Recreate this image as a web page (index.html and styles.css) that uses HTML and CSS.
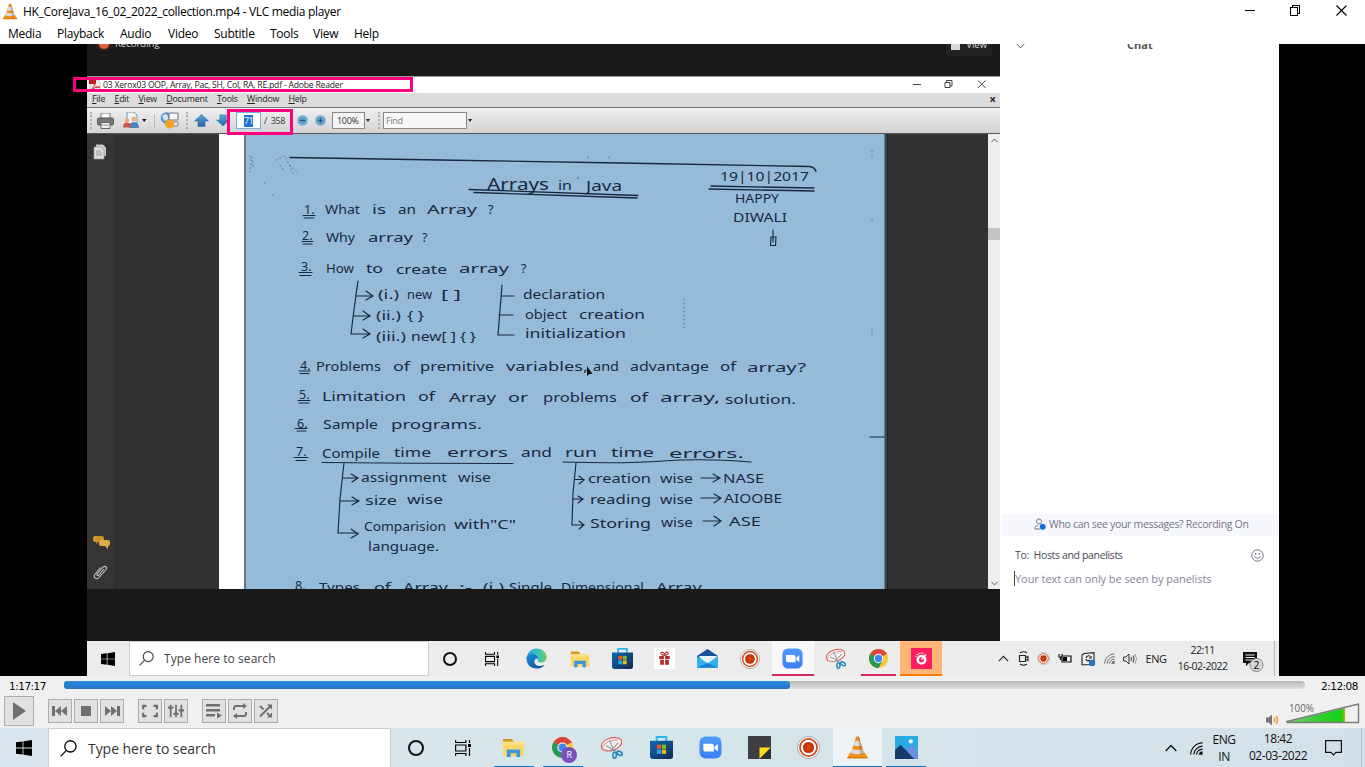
FILE: index.html
```html
<!DOCTYPE html>
<html lang="en">
<head>
<meta charset="utf-8">
<title>HK_CoreJava_16_02_2022_collection.mp4 - VLC media player</title>
<link rel="stylesheet" href="styles.css">
</head>
<body>
<svg class="defs" width="0" height="0" aria-hidden="true">
  <defs>
    <linearGradient id="edgeA" x1="0" y1="0" x2="1" y2="0"><stop offset="0" stop-color="#2aa5de"/><stop offset=".55" stop-color="#35bfc0"/><stop offset="1" stop-color="#6cd35a"/></linearGradient>
    <linearGradient id="edgeB" x1="0" y1="0" x2="1" y2="1"><stop offset="0" stop-color="#1b8fd8"/><stop offset="1" stop-color="#0c4a96"/></linearGradient>
    <linearGradient id="bag" x1="0" y1="0" x2="1" y2="1"><stop offset="0" stop-color="#0e6bb4"/><stop offset="1" stop-color="#14284e"/></linearGradient>
    <linearGradient id="cam" x1="0" y1="0" x2="0" y2="1"><stop offset="0" stop-color="#4d9bff"/><stop offset="1" stop-color="#3c7ef5"/></linearGradient>
    <linearGradient id="vol" x1="0" y1="0" x2="1" y2="0"><stop offset="0" stop-color="#7fd07f"/><stop offset=".5" stop-color="#32cc32"/><stop offset=".94" stop-color="#16d016"/><stop offset="1" stop-color="#b0b800"/></linearGradient>
    <radialGradient id="recDot"><stop offset="0" stop-color="#e04a10"/><stop offset="1" stop-color="#b82a06"/></radialGradient>
    <linearGradient id="arrow" x1="0" y1="0" x2="0" y2="1"><stop offset="0" stop-color="#5ba4d6"/><stop offset="1" stop-color="#2767a8"/></linearGradient>
  </defs>
  <symbol id="cone" viewBox="0 0 24 24"><path d="M4 17.500h16l2.400 5H1.600z" fill="#f59a1c"/><path d="M1.800 21.500h20.400l.6 2H1.200z" fill="#e07a0a"/><path d="M10.500.5h3L19 19q-7 3-14 0z" fill="#f58a1c"/><path d="M9.300 5h5.400l1.500 5q-4.200 1.500-8.400 0zM6.800 13.500q5.200 1.800 10.400 0l1.300 4.500q-6.500 2.200-13 0z" fill="#dcdcdc"/><path d="M12.500.5h1L19 19q-1.500.8-4 1.200z" fill="#7a4a28" opacity=".3"/></symbol>
  <symbol id="win" viewBox="0 0 16 16"><path d="M0 2.300 6.600 1.400V7.600H0zM7.400 1.300 16 0v7.600H7.400zM0 8.400h6.600v6.200L0 13.700zM7.400 8.400H16V16l-8.600-1.300z"/></symbol>
  <symbol id="search" viewBox="0 0 16 16"><circle cx="9.800" cy="6" r="5.300" fill="none" stroke="currentColor" stroke-width="1.200"/><path d="M6 9.800.6 15.400" stroke="currentColor" stroke-width="1.200"/></symbol>
  <symbol id="taskview" viewBox="0 0 16 16"><path d="M.6 0v2.500h10.300V0M.6 16v-2.500h10.300V16M.6 5h10.300v6H.6zM14.500 0v3M14.500 8v8" fill="none" stroke="currentColor" stroke-width="1.200"/><path d="M13 4h3v3h-3z"/></symbol>
  <symbol id="edge" viewBox="0 0 24 24"><path d="M12 .5c7 0 11.500 5 11.500 10 0 4-3 6-6 6-2.500 0-4.500-1-4-2.500C15 10 11 7 8 8c-3.500 1-6 4-6.500 6C-.5 7 5 .5 12 .5z" fill="url(#edgeA)"/><path d="M.5 12C.5 7.500 5.500 6 9 7c3 1 6 3 4.500 6.500-.5-1-1-1.500-2-1.500-4 3-1 8.500 3.500 8.500 2.500 0 4.500-1 6.500-1.500-2.500 3-6 4.500-9.500 4.500C5.500 23.500.5 18.500.5 12z" fill="url(#edgeB)"/></symbol>
  <symbol id="folder" viewBox="0 0 24 24"><path d="M1 3h9l2 2v4H1z" fill="#d79a16"/><path d="M1 6h22v15H1z" fill="#fbd668"/><path d="M1 6h22v3H1z" fill="#ffe08a"/><path d="M5 22v-8h14v8h-4v-4H9v4z" fill="#3f97d4"/></symbol>
  <symbol id="store" viewBox="0 0 24 24"><path d="M7 6V1h10v5" fill="none" stroke="#2db5ee" stroke-width="2"/><path d="M0 5h24v16.500q0 2.500-2.500 2.500h-19Q0 24 0 21.500z" fill="url(#bag)"/><path fill="#ef5123" d="M7.200 9h4.400v4.400H7.200z"/><path fill="#7cba28" d="M12.400 9h4.400v4.400h-4.400z"/><path fill="#26a8e8" d="M7.200 14.200h4.400v4.400H7.200z"/><path fill="#fbba13" d="M12.400 14.200h4.400v4.400h-4.400z"/></symbol>
  <symbol id="gift" viewBox="0 0 24 24"><path fill="#fff" d="M0 0h24v24H0z"/><path d="M6 9h5.300v3.500H6zm6.700 0H18v3.500h-5.300zM7 13.500h4.300V19H7zm5.700 0H17V19h-4.300z" fill="#b32b2b"/><path d="M12 8.500C8 8 7 6 8.500 5S12 6 12 8.500c0-2.500 2-4.500 3.500-3.500S16 8 12 8.500z" fill="none" stroke="#b32b2b" stroke-width="1.200"/></symbol>
  <symbol id="mail" viewBox="0 0 24 24"><path d="M0 9 12 1l12 8v3H0z" fill="#1453a0"/><path d="M2 9h20L12 16z" fill="#f4fafe"/><path d="M0 9.500 12 17 24 9.500V22.500H0z" fill="#34b1ed"/><path d="M2 10 24 9.500 12 17z" fill="#e8f5fc"/><path d="M0 22.500 12 17l12 5.500z" fill="#1684d0"/></symbol>
  <symbol id="rec" viewBox="0 0 24 24"><circle cx="12" cy="12" r="11.500" fill="#fff" stroke="#999" stroke-width=".9"/><circle cx="12" cy="12" r="8.900" fill="none" stroke="#cf4a1c" stroke-width="1.800"/><circle cx="12" cy="12" r="5.800" fill="url(#recDot)"/></symbol>
  <symbol id="zoom" viewBox="0 0 24 24"><rect x=".5" y=".5" width="23" height="23" rx="6.500" fill="url(#cam)"/><path d="M4.500 8h8.500q2.500 0 2.500 2.500V16.300H7Q4.500 16.300 4.500 14zM16.300 11l3.400-2.700v7.700l-3.400-2.500z" fill="#fff"/></symbol>
  <symbol id="snip" viewBox="0 0 24 24"><ellipse cx="12" cy="8.500" rx="11" ry="6.500" transform="rotate(-18 12 8.500)" fill="#f5eeee" stroke="#e0585c" stroke-width="1.100"/><path d="M2.500 15C0 10 10 3.500 19 4" fill="none" stroke="#e58b8e"/><path d="m10 4 4.500 12M19 7l-8 9M6 10l11 6" stroke="#8c969c" stroke-width="1.100"/><g fill="none" stroke="#2185bd" stroke-width="1.700"><ellipse cx="15.300" cy="20" rx="1.800" ry="3"/><ellipse cx="20.500" cy="18" rx="3" ry="1.800" transform="rotate(30 20.500 18)"/></g></symbol>
  <symbol id="chrome" viewBox="0 0 24 24"><circle cx="12" cy="12" r="11" fill="#fbc933"/><path d="M12 12 2.500 6.500A11 11 0 0 1 21.500 6.500z" fill="#d9473a"/><path d="M2.500 6.500A11 11 0 0 0 12 23l4.700-8.300L12 12z" fill="#249b55"/><path d="M12 6.500h9.500" stroke="#d9473a" stroke-width="1"/><circle cx="12" cy="12" r="5.300" fill="#fff"/><circle cx="12" cy="12" r="4.200" fill="#4285f0"/></symbol>
  <symbol id="timer" viewBox="0 0 24 24"><path fill="#fa1e5e" d="M0 0h24v24H0z"/><circle cx="12" cy="13.500" r="4.300" fill="none" stroke="#fff" stroke-width="2.800"/><path d="m12 13.500 5-6" stroke="#fff" stroke-width="1.800"/><path d="M5.500 10a7.500 7.500 0 0 1 9-4" stroke="#fff" stroke-width="1.300" fill="none" stroke-dasharray="1.300 1"/></symbol>
  <symbol id="notes" viewBox="0 0 24 24"><path d="M0 0h24v24H0z" fill="#3e3f42"/><path d="M12 12h12L12 24z" fill="#ffdf14"/><path d="M24 12v12H12z" fill="#2f3032"/></symbol>
  <symbol id="photos" viewBox="0 0 24 24"><path fill="#29a9e6" d="M0 0h24v24H0z"/><path d="m10 16 8-7 6 6v9H14z" fill="#6790de"/><path d="M0 14.500 6 9l14 15H0z" fill="#173a6b"/><circle cx="16.500" cy="5.500" r="2.200" fill="#fff"/></symbol>
  <symbol id="wifi" viewBox="0 0 14 14"><g fill="none" stroke="currentColor" stroke-width="1.200"><path d="M.7 13.500A13 13 0 0 1 13.500 1"/><path d="M4 13.500A10 10 0 0 1 13.500 4.500M7 13.500a7 7 0 0 1 6.500-5.800"/></g><path d="M9.500 13.800a4 4 0 0 1 4-3.800v3.800z" fill="currentColor"/></symbol>
  <symbol id="chev" viewBox="0 0 12 8"><path d="m.7 7 5.300-5.500L11.300 7" fill="none" stroke="currentColor" stroke-width="1.300"/></symbol>
</svg>

<div class="app">
  <header class="titlebar">
    <svg class="cone-s"><use href="#cone"/></svg>
    <span class="title">HK_CoreJava_16_02_2022_collection.mp4 - VLC media player</span>
    <svg class="winbtns" viewBox="0 0 102 11"><g fill="none" stroke="#000" shape-rendering="crispEdges"><path d="M0 5.500h10M45.500 2.500h7v8h-7zM47.500 2V.5h7v8h-2"/></g><path d="m91.500.5 10 10m0-10-10 10" stroke="#000" stroke-width="1.100"/></svg>
  </header>
  <nav class="menubar"><span class="m1">Media</span><span class="m2">Playback</span><span class="m3">Audio</span><span class="m4">Video</span><span class="m5">Subtitle</span><span class="m6">Tools</span><span class="m7">View</span><span>Help</span></nav>

  <main class="video">
    <section class="share">
      <div class="meeting"><i class="reclight"></i><span>Recording</span><span class="viewbtn"><i></i>View</span></div>
      <div class="rtitle">
        <svg width="12" height="11" viewBox="0 0 12 11"><path d="M1 0h8l2 2v9H1z" fill="#eee" stroke="#aaa" stroke-width=".6"/><path d="M0 0h7v4H0z" fill="#c11f1f"/><path d="M2 10c3-3 4-6 3-8 0 4 3 6 6 5-4 0-7 1-9 3z" fill="none" stroke="#d63434"/></svg>
        <span>03 Xerox03 OOP, Array, Pac, SH, Col, RA, RE.pdf - Adobe Reader</span>
        <svg class="rbtns" width="74" height="9" viewBox="0 0 74 9"><path d="M1 4.500h8M33 2.500h5v5h-5zM34.500 2V.5H40V6h-2M66 .5l7.500 7.500M73.500.5 66 8" fill="none" stroke="#444"/></svg>
      </div>
      <div class="rmenu"><span><u>F</u>ile</span><span><u>E</u>dit</span><span><u>V</u>iew</span><span><u>D</u>ocument</span><span><u>T</u>ools</span><span><u>W</u>indow</span><span><u>H</u>elp</span><b>×</b></div>
      <div class="rtools">
        <i class="grip"></i>
        <svg class="t-print" width="17" height="16" viewBox="0 0 17 16"><path d="M4 0h9v6H4z" fill="#f8f8f8" stroke="#777"/><rect x=".5" y="5" width="16" height="7" rx="1.500" fill="#74797c" stroke="#555b5e"/><path d="M4 9.500h9v6H4z" fill="#eee" stroke="#666"/><path d="M5 12h7" stroke="#999"/></svg>
        <svg class="t-share" width="24" height="17" viewBox="0 0 24 17"><path d="M4 0h7l3 3v9H4z" fill="#eef3f8" stroke="#7799b5"/><circle cx="11" cy="7" r="2.600" fill="#e9b17c"/><path d="M6 16q0-6 5-6t5 6z" fill="#4a83bd"/><path d="M0 15.500q0-5 4-5t4 5z" fill="#cb5a4a"/><circle cx="4" cy="8.500" r="2.300" fill="#e8ad78"/><path d="m19 7 2.200 3 2.200-3z" fill="#111"/></svg>
        <i class="tsep"></i>
        <svg class="t-collab" width="19" height="17" viewBox="0 0 19 17"><circle cx="6.500" cy="6" r="5.800" fill="#4c8cc6"/><path d="M2 4q4-4 6 0T4 9z" fill="#cfe2ef"/><path d="M9 1h9v7H9z" fill="#f4f4f4" stroke="#777"/><path d="M13 10h5v4h-5z" fill="#e5e5e5" stroke="#888"/><circle cx="9.500" cy="12" r="4.500" fill="#f3a427"/></svg>
        <i class="grip g2"></i>
        <svg class="t-up" width="15" height="13" viewBox="0 0 15 13"><path d="m7.500.5 7 6.500H11v5.500H4V7H.5z" fill="url(#arrow)" stroke="#2c6aa2" stroke-width=".6"/></svg>
        <svg class="t-down" width="14" height="13" viewBox="0 0 15 13"><path d="m7.500 12.500 7-6.500H11V.5H4V6H.5z" fill="url(#arrow)" stroke="#2c8a9a" stroke-width=".6"/></svg>
        <span class="pageno"><mark>71</mark></span><span class="total">/&nbsp; 358</span>
        <i class="zoomb">−</i><i class="zoomb z2">+</i>
        <span class="pct">100%</span><i class="caret"></i><i class="grip g3"></i><span class="find">Find</span><i class="caret"></i>
      </div>
      <div class="rbody">
        <div class="side"><div class="strip">
          <svg width="14" height="16" viewBox="0 0 14 16"><path d="M3 .5h7l3 3V12H3z" fill="#c7c7c7"/><path d="M1 3h7l3 3v9H1z" fill="#ddd" stroke="#999" stroke-width=".7"/><path d="M3 7h5M3 9h6M3 11h6" stroke="#999"/></svg>
          <span class="grow"></span>
          <svg width="17" height="14" viewBox="0 0 17 14"><path d="M2 1h7q2 0 2 2v2q0 2-2 2H5L3 9V7Q0 7 0 5V3q0-2 2-2z" fill="#c9922c"/><path d="M8 5h7q2 0 2 2v2q0 2-2 2v3l-3-3H8q-2 0-2-2V7q0-2 2-2z" fill="#e0ac45"/></svg>
          <svg class="clip" width="15" height="16" viewBox="0 0 15 16"><path d="m4 10 6-7c2-1.500 4.500 0 3 2.500l-7 8c-2 2.500-6 .5-4.500-2.500l6-7.500M4 10c-.5 1.500 1 2 2 1l5-6" fill="none" stroke="#c4c4c4" stroke-width="1.100"/></svg>
        </div></div>
        <div class="gutter"></div>
        <svg class="page" width="641" height="455" viewBox="246 134 641 455">
          <g class="ink">
            <path d="M290 157.500 440 160l180 3 190 3.500q5 1 6 5M469 189.500l169 6M474 192.500l163 5.500M711 186l103 2M709 189l105 2" stroke-width="1.300"/>
            <g class="under"><path d="M303 215.500h12M304 218h10M302 241.500h11M303 244h9M299 272.500h13M300 275.500h11M299 371h11M300 373.500h9M298 400.500h12M299 403h10M295 428.500h12M297 431h9M294 457.500h14M296 460.500h10"/></g>
            <path d="M358 281q-3 20-7 53h18M356 296h17M353 316h16M366 291l7 5-7 4M363 311l7 5-7 4M363 329l7 5-7 4M502 285l-4 50h16M501 296h13M499 315h14"/>
            <path d="M322 462.500q95 1 191 1M563 462q60 2 100-1t88 1M344 463l-4 36-2 34h20M343 478h14M341 501h17M351 474l7 4-6 4M352 497l7 4-7 4M351 529l7 5-7 4"/>
            <path d="M576 463l-3 30-1 32h12M575 479.500h9M573 499h9M579 476l5 4-5 4M578 496l5 3-5 4M579 521l5 4-5 4M701 478h18M713 474l7 4-7 4M701 498h19M714 494l7 4-7 5M703 521h17M714 516l7 5-7 5"/>
            <path d="M773 230v8M771 237l-.5 8.500h5L776 237zM773 238v4M870 437h15"/>
            <path class="specks" d="M250 156q2 4 0 16M252 157q1 5 1 10M276 160l9-4M280 165q4 3 2 7M286 158l7 15M290 165l8 8M264 183h2M272 195h2M684 299v30M872 151v5M872 220v4M872 330v5M588 157v4M609 157v4"/>
          </g>
          <g class="hand">
            <text x="487" y="190" textLength="62" font-size="16" lengthAdjust="spacingAndGlyphs">Arrays</text><text x="558" y="190" textLength="14" lengthAdjust="spacingAndGlyphs">in</text><text x="577" y="184" font-size="8">'</text><text x="586" y="191" textLength="36" font-size="15" lengthAdjust="spacingAndGlyphs">Java</text>
            <text x="720" y="181" textLength="89" font-size="13" lengthAdjust="spacingAndGlyphs">19|10|2017</text><text x="735" y="203" textLength="44" font-size="12" lengthAdjust="spacingAndGlyphs">HAPPY</text><text x="733" y="222" textLength="54" font-size="12" lengthAdjust="spacingAndGlyphs">DIWALI</text>
            <text x="304" y="214">1.</text><text x="325" y="214" textLength="35" lengthAdjust="spacingAndGlyphs">What</text><text x="372" y="214" textLength="14" lengthAdjust="spacingAndGlyphs">is</text><text x="398" y="214" textLength="18" lengthAdjust="spacingAndGlyphs">an</text><text x="427" y="214" textLength="50" lengthAdjust="spacingAndGlyphs">Array</text><text x="488" y="214">?</text>
            <text x="302" y="240">2.</text><text x="326" y="242" textLength="29" lengthAdjust="spacingAndGlyphs">Why</text><text x="368" y="242" textLength="45" lengthAdjust="spacingAndGlyphs">array</text><text x="422" y="242">?</text>
            <text x="301" y="271">3.</text><text x="326" y="273" textLength="28" lengthAdjust="spacingAndGlyphs">How</text><text x="366" y="273" textLength="17" lengthAdjust="spacingAndGlyphs">to</text><text x="396" y="274" textLength="51" lengthAdjust="spacingAndGlyphs">create</text><text x="459" y="273" textLength="50" lengthAdjust="spacingAndGlyphs">array</text><text x="521" y="273">?</text>
            <text x="378" y="299" textLength="21" lengthAdjust="spacingAndGlyphs">(i.)</text><text x="407" y="299" textLength="25" lengthAdjust="spacingAndGlyphs">new</text><text x="441" y="299" textLength="20" lengthAdjust="spacingAndGlyphs">[ ]</text>
            <text x="376" y="320" textLength="25" lengthAdjust="spacingAndGlyphs">(ii.)</text><text x="407" y="320" textLength="17" lengthAdjust="spacingAndGlyphs">{ }</text>
            <text x="376" y="341" textLength="30" lengthAdjust="spacingAndGlyphs">(iii.)</text><text x="411" y="341" textLength="65" lengthAdjust="spacingAndGlyphs">new[ ] { }</text>
            <text x="523" y="299" textLength="82" lengthAdjust="spacingAndGlyphs">declaration</text><text x="525" y="319" textLength="42" lengthAdjust="spacingAndGlyphs">object</text><text x="579" y="319" textLength="66" lengthAdjust="spacingAndGlyphs">creation</text><text x="525" y="338" textLength="101" lengthAdjust="spacingAndGlyphs">initialization</text>
            <text x="300" y="370">4.</text><text x="316" y="371" textLength="65" lengthAdjust="spacingAndGlyphs">Problems</text><text x="393" y="371" textLength="17" lengthAdjust="spacingAndGlyphs">of</text><text x="420" y="371" textLength="74" lengthAdjust="spacingAndGlyphs">premitive</text><text x="506" y="371" textLength="82" lengthAdjust="spacingAndGlyphs">variables,</text><text x="593" y="371" textLength="26" lengthAdjust="spacingAndGlyphs">and</text><text x="630" y="371" textLength="79" lengthAdjust="spacingAndGlyphs">advantage</text><text x="720" y="371" textLength="16" lengthAdjust="spacingAndGlyphs">of</text><text x="747" y="372" textLength="59" lengthAdjust="spacingAndGlyphs">array?</text>
            <text x="299" y="399">5.</text><text x="322" y="401" textLength="84" lengthAdjust="spacingAndGlyphs">Limitation</text><text x="418" y="401" textLength="17" lengthAdjust="spacingAndGlyphs">of</text><text x="449" y="402" textLength="47" lengthAdjust="spacingAndGlyphs">Array</text><text x="508" y="402" textLength="20" lengthAdjust="spacingAndGlyphs">or</text><text x="543" y="402" textLength="74" lengthAdjust="spacingAndGlyphs">problems</text><text x="630" y="402" textLength="18" lengthAdjust="spacingAndGlyphs">of</text><text x="660" y="402" textLength="60" lengthAdjust="spacingAndGlyphs">array,</text><text x="725" y="404" textLength="71" lengthAdjust="spacingAndGlyphs">solution.</text>
            <text x="297" y="428">6.</text><text x="323" y="429" textLength="55" lengthAdjust="spacingAndGlyphs">Sample</text><text x="391" y="429" textLength="91" lengthAdjust="spacingAndGlyphs">programs.</text>
            <text x="296" y="456">7.</text><text x="322" y="458" textLength="58" lengthAdjust="spacingAndGlyphs">Compile</text><text x="394" y="457" textLength="37" lengthAdjust="spacingAndGlyphs">time</text><text x="447" y="457" textLength="61" lengthAdjust="spacingAndGlyphs">errors</text><text x="521" y="457" textLength="31" lengthAdjust="spacingAndGlyphs">and</text><text x="565" y="457" textLength="32" lengthAdjust="spacingAndGlyphs">run</text><text x="611" y="457" textLength="43" lengthAdjust="spacingAndGlyphs">time</text><text x="669" y="458" textLength="75" lengthAdjust="spacingAndGlyphs">errors.</text>
            <text x="361" y="482" textLength="86" lengthAdjust="spacingAndGlyphs">assignment</text><text x="458" y="482" textLength="33" lengthAdjust="spacingAndGlyphs">wise</text><text x="365" y="505" textLength="32" lengthAdjust="spacingAndGlyphs">size</text><text x="407" y="504" textLength="36" lengthAdjust="spacingAndGlyphs">wise</text><text x="364" y="531" textLength="82" lengthAdjust="spacingAndGlyphs">Comparision</text><text x="454" y="529" textLength="62" lengthAdjust="spacingAndGlyphs">with"C"</text><text x="368" y="551" textLength="71" lengthAdjust="spacingAndGlyphs">language.</text>
            <text x="588" y="483" textLength="63" lengthAdjust="spacingAndGlyphs">creation</text><text x="660" y="483" textLength="33" lengthAdjust="spacingAndGlyphs">wise</text><text x="723" y="483" textLength="41" lengthAdjust="spacingAndGlyphs">NASE</text><text x="590" y="504" textLength="61" lengthAdjust="spacingAndGlyphs">reading</text><text x="660" y="504" textLength="33" lengthAdjust="spacingAndGlyphs">wise</text><text x="724" y="503" textLength="58" lengthAdjust="spacingAndGlyphs">AIOOBE</text><text x="590" y="528" textLength="61" lengthAdjust="spacingAndGlyphs">Storing</text><text x="661" y="527" textLength="32" lengthAdjust="spacingAndGlyphs">wise</text><text x="729" y="526" textLength="32" lengthAdjust="spacingAndGlyphs">ASE</text>
            <text x="295" y="590">8.</text><text x="319" y="592" textLength="41" lengthAdjust="spacingAndGlyphs">Types</text><text x="374" y="592" textLength="17" lengthAdjust="spacingAndGlyphs">of</text><text x="403" y="592" textLength="45" lengthAdjust="spacingAndGlyphs">Array</text><text x="459" y="592" textLength="13" lengthAdjust="spacingAndGlyphs">:-</text><text x="483" y="592" textLength="21" lengthAdjust="spacingAndGlyphs">(i.)</text><text x="509" y="592" textLength="43" lengthAdjust="spacingAndGlyphs">Single</text><text x="561" y="592" textLength="83" lengthAdjust="spacingAndGlyphs">Dimensional</text><text x="656" y="592" textLength="50" lengthAdjust="spacingAndGlyphs">Array.</text>
          </g>
          <path d="M587 366v10l2.500-2h3z" fill="#111"/>
          <path d="M884.500 134h3v455h-3z" fill="#354850"/>
        </svg>
        <div class="rest"></div>
        <div class="scroll"><svg width="7" height="5"><use href="#chev"/></svg><i></i><svg class="flip" width="7" height="5"><use href="#chev"/></svg></div>
      </div>
      <div class="mark-title"></div><div class="mark-page"></div>
    </section>
    <aside class="chat">
      <div class="chead"><svg class="flip" width="9" height="6"><use href="#chev"/></svg><b>Chat</b></div>
      <div class="who"><svg width="12" height="12" viewBox="0 0 12 12"><circle cx="5" cy="3.500" r="2.500" fill="none" stroke="#747487"/><path d="M6 11H1q-1-3 3-3.500" fill="none" stroke="#747487"/><circle cx="8.700" cy="8.700" r="3" fill="#0e71eb"/></svg><span>Who can see your messages? Recording On</span></div>
      <div class="to"><span>To:&nbsp; Hosts and panelists</span><svg width="13" height="13" viewBox="0 0 13 13"><g fill="none" stroke="#6e7680"><circle cx="6.500" cy="6.500" r="5.700"/><path d="M3.500 7.500q3 3.500 6 0"/></g><path d="M4 4h1.300v1.500H4zm3.700 0H9v1.500H7.700z" fill="#6e7680"/></svg></div>
      <div class="msg">Your text can only be seen by panelists</div>
    </aside>
    <div class="bar1">
      <span class="start"><svg><use href="#win"/></svg></span>
      <span class="sbox"><svg><use href="#search"/></svg><span>Type here to search</span></span>
      <span class="c c0"><i class="ring"></i></span><span class="c c0 tv"><svg><use href="#taskview"/></svg></span>
      <span class="c"><svg><use href="#edge"/></svg></span><span class="c"><svg class="fo"><use href="#folder"/></svg></span><span class="c"><svg><use href="#store"/></svg></span><span class="c"><svg><use href="#gift"/></svg></span><span class="c"><svg><use href="#mail"/></svg></span><span class="c"><svg class="fo"><use href="#rec"/></svg></span><span class="c on"><svg><use href="#zoom"/></svg></span><span class="c"><svg><use href="#snip"/></svg></span><span class="c run"><svg><use href="#chrome"/></svg></span><span class="c hot"><svg><use href="#timer"/></svg></span>
      <span class="tray1">
        <svg width="11" height="7"><use href="#chev"/></svg>
        <svg width="11" height="15" viewBox="0 0 11 15"><path d="M1.500 4.500h6v6h-6zM8 6.500l2-1v4l-2-1M2 2q3.500-2.500 7 0M2 13q3.500 2.500 7 0" fill="none" stroke="#222" stroke-width="1.100"/></svg>
        <svg width="13" height="13"><use href="#rec"/></svg>
        <svg width="14" height="11" viewBox="0 0 14 11"><path d="M4 3h9v6H4zM1 1v3h3V1M2.500 4v3" fill="none" stroke="#111" stroke-width="1.200"/><path d="M5 4h4v4H5z"/></svg>
        <svg width="15" height="14" viewBox="0 0 15 14"><path d="M3 1.500 13 .7v12H1V3z" fill="none" stroke="#222" stroke-width="1.100"/><path d="M5 6q1-3 4-2M10 4v2H8M9 8q-3 2-4-1" fill="none" stroke="#222" stroke-width="1.200"/><circle cx="11" cy="11" r="3.200" fill="#2576c4"/></svg>
        <svg width="11" height="11" class="gray"><use href="#wifi"/></svg>
        <svg width="14" height="12" viewBox="0 0 14 12"><path d="M.6 4H3l3-3v10L3 8H.6zM8 4q1 2 0 4M10 2.500q2 3.500 0 7" fill="none" stroke="#333"/><path d="M12 1q3 5 0 10" fill="none" stroke="#999"/></svg>
        <span class="eng">ENG</span>
        <span class="clock"><span>22:11</span><span>16-02-2022</span></span>
        <span class="notif"><svg width="21" height="21" viewBox="0 0 21 21"><path d="M0 1h14v11H6l-3 3v-3H0z" fill="#111"/><path d="M2.500 4h9M2.500 6.500h9M2.500 9h7" stroke="#eee"/><circle cx="13.500" cy="14" r="6.500" fill="#d8d8d8" stroke="#888"/><text x="10.500" y="18" font-size="10.500">2</text></svg></span>
        <i class="deskline"></i>
      </span>
    </div>
  </main>

  <footer class="vlc">
    <div class="seek"><span class="t1">1:17:17</span><span class="track"><i></i></span><span class="t2">2:12:08</span></div>
    <div class="ctl">
      <button class="big"><svg viewBox="0 0 18 18"><path d="M3 0v18l13-9z"/></svg></button>
      <div class="grp"><button><svg viewBox="0 0 16 12"><path d="M0 1h3v10H0zM3 6l6-5v10zM9 6l6-5v10z"/></svg></button><button><svg viewBox="0 0 16 12"><path d="M3 1h10v10H3z"/></svg></button><button><svg viewBox="0 0 16 12"><path d="M13 1h3v10h-3zM13 6 7 1v10zM7 6 1 1v10z"/></svg></button></div>
      <div class="grp"><button><svg viewBox="0 0 18 14"><path d="M0 5V0h5v2.500H2.500V5zM13 0h5v5h-2.500V2.500H13zM0 9h2.500v2.500H5V14H0zM15.500 9H18v5h-5v-2.500h2.500z"/></svg></button><button><svg viewBox="0 0 18 14"><path d="M2 0h2v14H2zM8 0h2v14H8zM14 0h2v14h-2zM0 2h6v2.500H0zM6 9h6v2.500H6zM12 5h6v2.500h-6z"/></svg></button></div>
      <div class="grp"><button><svg viewBox="0 0 16 14"><path d="M0 0h14v2.500H0zM0 5h14v2.500H0zM0 10h9v2.500H0zM11 8.500 16 11.500 11 14.500z"/></svg></button><button><svg viewBox="0 0 16 14"><path d="M2 6V4.500Q2 2 4 2h8M14 8v1.500q0 2.500-2 2.500H4" fill="none" stroke="#707070" stroke-width="2"/><path d="M11 -1 15 2l-4 3zM5 9l-4 3 4 3z"/></svg></button><button><svg viewBox="0 0 16 14"><path d="M2 2l3.500 3.500M9 9l3.500 3.500M2 12.500 12.500 2" fill="none" stroke="#707070" stroke-width="2"/><path d="M9 .5h5v5zM14 8.500v5H9z"/></svg></button></div>
      <span class="grow"></span>
      <svg class="spk" width="14" height="12" viewBox="0 0 14 12"><path d="M0 3.500h2.500L6 .5v11L2.500 8.500H0z" fill="#777"/><path d="M8 4q1.500 2 0 4M10 2q3 4 0 8" fill="none" stroke="#f39a24" stroke-width="1.600"/></svg>
      <svg class="volume" width="76" height="26" viewBox="0 0 76 26"><path d="M4 21.500 60 8v14H3z" fill="url(#vol)"/><path d="M2 21.500 73.500 4v18.500H3q-2 0-1-1z" fill="none" stroke="#7c7c7c" stroke-width="1.400" stroke-linejoin="round"/><text x="4" y="12" textLength="25" font-size="10" fill="#666" lengthAdjust="spacingAndGlyphs">100%</text></svg>
    </div>
  </footer>

  <div class="bar2">
    <span class="start"><svg><use href="#win"/></svg></span>
    <span class="sbox"><svg><use href="#search"/></svg><span>Type here to search</span></span>
    <span class="c"><i class="ring"></i></span><span class="c tv"><svg><use href="#taskview"/></svg></span>
    <span class="c run"><svg><use href="#folder"/></svg></span><span class="c run badge"><svg><use href="#chrome"/></svg><em>R</em></span><span class="c"><svg><use href="#snip"/></svg></span><span class="c"><svg><use href="#store"/></svg></span><span class="c"><svg><use href="#zoom"/></svg></span><span class="c"><svg><use href="#notes"/></svg></span><span class="c"><svg><use href="#rec"/></svg></span><span class="c run on"><svg><use href="#cone"/></svg></span><span class="c run"><svg><use href="#photos"/></svg></span>
    <span class="tray2">
      <svg width="12" height="8"><use href="#chev"/></svg>
      <svg class="wf" width="13" height="13"><use href="#wifi"/></svg>
      <span class="lang"><span>ENG</span><span>IN</span></span>
      <span class="clock"><span>18:42</span><span>02-03-2022</span></span>
      <svg class="bub" width="17" height="16" viewBox="0 0 17 16"><path d="M.6.600h15.800v11.800h-5.400L8.500 15 6 12.400H.6z" fill="none" stroke="#111" stroke-width="1.200"/></svg>
      <i class="deskline"></i>
    </span>
  </div>
</div>
</body>
</html>
```
FILE: styles.css
```css
* { box-sizing: border-box; }
body { margin: 0; background: #fff; color: #000; font: 12px "Open Sans", "Noto Sans", sans-serif; }
.defs { display: block; height: 0; }
.app { width: 1365px; height: 767px; overflow: hidden; display: flex; flex-direction: column; }
.app svg { display: block; flex: none; }
span { white-space: nowrap; }
i, em { font-style: normal; }
.grow { flex: 1; }
.flip { transform: scaleY(-1); }

.titlebar { height: 24px; flex: none; display: flex; align-items: center; padding: 0 18px 2px 2px; }
.cone-s { width: 16px; height: 17px; }
.title { margin: 1px auto 0 5px; letter-spacing: -.31px; }
.winbtns { width: 102px; height: 11px; margin-top: -2px; }
.menubar { height: 20px; flex: none; display: flex; align-items: center; padding: 0 0 1px 8px; letter-spacing: -.25px; }
.m1 { width: 49px; } .m2 { width: 63px; } .m3 { width: 48px; } .m4 { width: 46px; }
.m5 { width: 56px; } .m6 { width: 43px; } .m7 { width: 41px; }

.video { height: 632px; flex: none; background: #000; padding: 0 86px 0 87px; display: grid; grid-template: 597px 35px / 913px 279px; overflow: hidden; }
.share { background: #191919; position: relative; height: 597px; }
.meeting { height: 32px; overflow: hidden; display: flex; align-items: flex-start; color: #d5d5d5; font-size: 9.500px; padding: 0 8px 0 12px; line-height: 12px; }
.meeting > span { margin-top: -6px; }
.reclight { width: 10px; height: 10px; border-radius: 50%; background: #e8603c; margin: -5px 6px 0 0; box-shadow: 0 0 4px #a33; }
.meeting .viewbtn { margin: -7px 0 0 auto; display: flex; align-items: center; gap: 6px; background: #222; border-radius: 4px; padding: 2px 5px 5px; }
.viewbtn i { width: 9px; height: 9px; background: #d8d8d8; }
.rtitle { height: 17px; background: #fff; border-top: 1px solid #999; display: flex; align-items: center; padding: 0 14px 0 2px; font-size: 8.600px; letter-spacing: -.2px; color: #222; }
.rtitle span { margin: 0 auto 0 2px; }
.rbtns { margin-top: -2px; }
.rmenu { height: 14px; background: #dcdcdc; display: flex; align-items: center; gap: 9.300px; padding: 0 4px 2px 5px; font-size: 8.800px; letter-spacing: -.2px; color: #222; }
.rmenu b { margin-left: auto; font-size: 12px; }
.rmenu u { text-underline-offset: 1px; }
.rtools { height: 27px; border-top: 1px solid #777; border-bottom: 1px solid #555; background: linear-gradient(#efefef, #d3d3d4); display: flex; align-items: center; color: #333; font-size: 9px; padding-left: 3px; }
.rtools > i { flex: none; }
.grip { width: 3px; height: 17px; border-left: 2px dotted #b0b0b0; }
.t-print { margin-left: 4px; }
.t-share { margin-left: 9px; }
.tsep { width: 1px; height: 14px; background: #bbb; margin: 0 5px 0 7px; }
.g2 { margin: 0 5px 0 7px; }
.t-down { margin: 0 6px 0 7px; }
.pageno { width: 25px; height: 17px; border: 1px solid #79aed6; background: #fff; display: flex; justify-content: center; align-items: center; }
.pageno mark { background: #1775cf; color: #fff; line-height: 12px; letter-spacing: -.7px; }
.total { margin: 0 12px 0 3px; letter-spacing: -.4px; }
.zoomb { width: 11px; height: 11px; border-radius: 50%; background: radial-gradient(#5b9bca 35%, #9cc3de 75%); font-size: 11px; line-height: 10px; text-align: center; color: #12355c; }
.z2 { margin-left: 7px; margin-right: 6px; }
.pct, .find { height: 17px; border: 1px solid #888; background: #f4f4f4; display: flex; align-items: center; padding-left: 4px; width: 33px; letter-spacing: -.3px; }
.find { width: 84px; background: #f8f8f8; color: #777; padding-left: 2px; font-size: 9px; }
.caret { border: 2px solid transparent; border-top: 3px solid #222; margin: 2px 0 0 1px; }
.g3 { margin: 0 2px 0 8px; }
.rbody { height: 455px; display: flex; overflow: hidden; }
.side { width: 132px; background: #323232; }
.strip { width: 29px; height: 455px; border-right: 1px solid #2a2a2a; background: #353535; padding: 10px 0 9px 6px; display: flex; flex-direction: column; }
.clip { margin-top: 15px; }
.gutter { width: 27px; background: #fff; border-right: 2px solid #66798a; }
.page { background: #95bbd9; }
.ink { fill: none; stroke: #16283d; stroke-width: 1.150; stroke-linecap: round; }
.under { stroke-width: 1; }
.specks { stroke-width: .7; stroke-dasharray: 1 3; opacity: .65; }
.hand { fill: #182a40; font: 12.500px "Noto Sans", "Open Sans", sans-serif; }
.rest { width: 101px; background: #323232; border-left: 1px solid #222; }
.scroll { width: 12px; background: #eee; display: flex; flex-direction: column; align-items: center; padding: 4px 0 3px; color: #333; }
.scroll i { width: 12px; height: 12px; background: #c4c4c4; margin: 85px 0 auto; }
.mark-title { position: absolute; left: -14px; top: 33px; width: 340px; height: 15px; border: 3px solid #ff007f; }
.mark-page { position: absolute; left: 140px; top: 65px; width: 66px; height: 26px; border: 3px solid #ff007f; }

.chat { background: #fff; height: 597px; display: flex; flex-direction: column; color: #747487; }
.chead { height: 470px; display: flex; align-items: flex-start; font-size: 11px; color: #555; padding-left: 16px; overflow: hidden; }
.chead svg { margin-top: -1px; }
.chead b { margin: -7px 0 0 102px; line-height: 15px; }
.who { height: 22px; margin: 0 1px; background: #f7f8fd; display: flex; align-items: center; padding: 0 0 2px 33px; gap: 3px; font-size: 10.500px; letter-spacing: -.31px; }
.to { display: flex; justify-content: space-between; align-items: center; padding: 0 15px; margin-top: 10px; height: 18px; color: #484852; font-size: 10.500px; letter-spacing: -.35px; }
.msg { margin: 7px 0 0 14px; border-left: 1px solid #444; height: 15px; line-height: 16px; font-size: 11px; letter-spacing: -.06px; color: #85859a; }

.bar1 { grid-column: 1 / 3; background: #ececec; height: 35px; display: flex; align-items: stretch; }
.bar1 .start { width: 42px; display: flex; align-items: center; justify-content: center; }
.bar1 .start svg { width: 14px; height: 14px; }
.sbox { background: #fff; border: 1px solid #ccc; display: flex; align-items: center; color: #444; }
.bar1 .sbox { width: 300px; padding-left: 9px; font-size: 12px; letter-spacing: .06px; }
.bar1 .sbox svg { width: 15px; height: 15px; margin-right: 10px; }
.c { display: flex; align-items: center; justify-content: center; flex: none; position: relative; }
.bar1 .c { width: 42.700px; }
.bar1 .c svg { width: 21px; height: 21px; }
.bar1 .c .fo { width: 20px; height: 20px; }
.bar1 .c0 { width: 42px; }
.bar1 .tv { margin-right: 2.500px; padding-right: 1px; }
.bar1 .tv svg { width: 14px; height: 14px; }
.ring { width: 14px; height: 14px; border: 2px solid #111; border-radius: 50%; }
.bar1 .on { background: linear-gradient(#d42a5c, #d42a5c) bottom / 100% 2px no-repeat #f8f8f8; }
.bar1 .run { background: linear-gradient(#d42a5c, #d42a5c) bottom / 35px 2px no-repeat; }
.bar1 .hot { background: linear-gradient(#ff7a00, #ff7a00) bottom / 100% 2px no-repeat #ffb577; }
.tray1 { flex: 1; display: flex; align-items: center; margin-left: 56px; gap: 9px; font-size: 11px; color: #222; }
.gray { color: #666; }
.tray1 > svg { margin-right: -.7px; }
.eng { letter-spacing: -.5px; width: 20px; }
.clock { display: flex; flex-direction: column; align-items: center; }
.tray1 .clock { line-height: 16px; letter-spacing: -.5px; width: 54px; font-size: 10.500px; margin: -2px 0 0 1px; }
.notif { margin: 5px 0 0 4px; }
.deskline { width: 1px; background: #bbb; align-self: stretch; }
.tray1 .deskline { margin-left: 1px; }

.vlc { height: 52px; flex: none; background: #f0f0f0; }
.seek { height: 20px; display: flex; align-items: center; padding: 0 6px 0 9px; font: 10.500px "DejaVu Sans", sans-serif; letter-spacing: -.5px; }
.t1 { width: 55px; }
.t2 { width: 38px; }
.track { height: 8px; width: 1241px; margin: -2px 16px 0 0; border-radius: 4px; background: linear-gradient(#b9b9b9, #dedede); flex: none; }
.track i { display: block; width: 726px; height: 8px; border-radius: 3px; background: linear-gradient(#2c8adb, #2374c7); }
.ctl { height: 32px; display: flex; align-items: center; padding: 0 4px 2px; gap: 14px; }
.ctl button { width: 24px; height: 24px; padding: 0; border: 1px solid #adadad; background: #e1e1e1; display: flex; align-items: center; justify-content: center; }
.ctl .big { width: 30px; height: 30px; }
.ctl button svg { width: 16px; height: 14px; fill: #707070; overflow: visible; }
.ctl .big svg { width: 18px; height: 18px; }
.grp { display: flex; gap: 2px; }
.ctl .spk { margin: 17px -9px 0 0; }
.volume { margin-top: 3px; }

.bar2 { height: 39px; flex: none; display: flex; background: linear-gradient(90deg, #d7e5ed, #d5e6ea 50%, #d3e0e9); }
.bar2 .start { width: 48px; display: flex; align-items: center; justify-content: center; }
.bar2 .start svg { width: 16px; height: 16px; }
.bar2 .sbox { width: 343px; border-bottom: 0; padding: 0 0 0 11px; font-size: 14px; letter-spacing: -.05px; color: #333; }
.bar2 .sbox svg { width: 17px; height: 17px; margin: 0 11px 0 0; color: #000; }
.bar2 .c { width: 49.100px; }
.bar2 .c svg { width: 23px; height: 23px; }
.bar2 .tv { padding-right: 3px; }
.bar2 .tv svg { width: 16px; height: 16px; }
.bar2 .ring { width: 16px; height: 16px; }
.bar2 .run { background: linear-gradient(#0078d7, #0078d7) bottom / 40px 1px no-repeat; }
.bar2 .on { background: linear-gradient(#0078d7, #0078d7) bottom / 100% 1px no-repeat #edf3f7; }
.badge em { position: absolute; right: 10px; bottom: 4px; width: 16px; height: 16px; border-radius: 50%; background: #7a50bd; color: #fff; font-size: 9px; line-height: 16px; text-align: center; }
.tray2 { margin-left: auto; display: flex; align-items: center; font-size: 12px; color: #111; padding-right: 3px; }
.tray2 .wf { margin: 2px 0 0 13px; }
.lang { display: flex; flex-direction: column; align-items: center; line-height: 17px; letter-spacing: -.5px; width: 24px; margin-left: 9px; }
.tray2 .clock { line-height: 17px; letter-spacing: -.45px; width: 60px; margin: -1px 0 0 12px; }
.bub { margin: 1px 0 0 17px; }
.tray2 .deskline { margin-left: 19px; }
```
